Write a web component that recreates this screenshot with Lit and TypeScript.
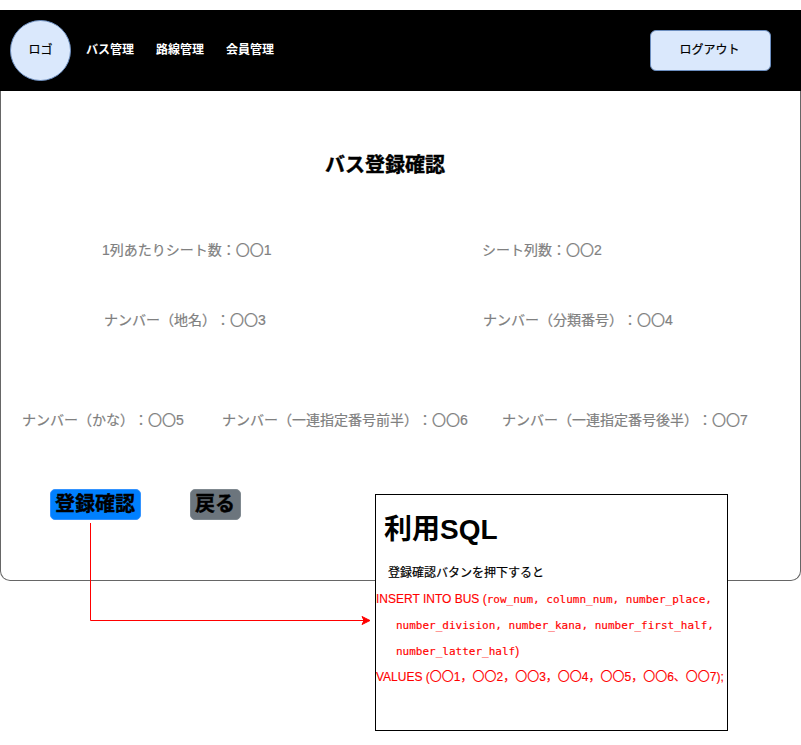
import { LitElement, html, css, svg } from "lit";
import { customElement } from "lit/decorators.js";

@customElement("app-root")
export class AppRoot extends LitElement {
  static styles = css`
    :host {
      display: block;
      position: relative;
      box-sizing: border-box;
      width: 801px;
      height: 745px;
      padding-top: 10px;
      overflow: hidden;
      background: #fff;
      color: #000;
      font: 12px/20px "Liberation Sans", "Noto Sans CJK JP", sans-serif;
      text-spacing-trim: space-all;
      white-space: nowrap;
    }
    * { box-sizing: border-box; }
    .frame {
      height: 571px;
      border: 1px solid #666;
      border-top: 0;
      border-radius: 0 0 10px 10px;
    }
    header {
      display: flex;
      align-items: center;
      height: 81px;
      margin: 0 -1px;
      padding: 0 30px 0 10px;
      background: #000;
    }
    .logo, .logout {
      display: flex;
      align-items: center;
      justify-content: center;
      background: #dae8fc;
      border: 1px solid #6c8ebf;
      padding-bottom: 2px;
      -webkit-text-stroke: 0.2px currentColor;
    }
    .logo { width: 61px; height: 61px; border-radius: 50%; }
    .logout {
      width: 121px;
      height: 41px;
      padding-right: 2px;
      border-radius: 6px;
      margin-left: auto;
    }
    nav {
      display: flex;
      gap: 22px;
      margin-left: 15px;
      padding-bottom: 2px;
      color: #fff;
      font-weight: 700;
    }
    h1 {
      margin: 59px 0 0 324px;
      font-size: 20px;
      line-height: 30px;
      -webkit-text-stroke: 0.4px currentColor;
    }
    .row {
      display: flex;
      color: #808080;
      font-size: 14px;
      line-height: 20px;
      -webkit-text-stroke: 0.2px currentColor;
    }
    .seats { margin: 60px 0 0 101px; }
    .seats .field:first-child { width: 380px; }
    .plate { margin: 50px 0 0 103px; }
    .plate .field:first-child { width: 379px; }
    .serial { margin: 80px 0 0 21px; }
    .serial .field:nth-child(1) { width: 200px; }
    .serial .field:nth-child(2) { width: 280px; }
    .actions {
      display: flex;
      gap: 49px;
      margin: 59px 0 0 49px;
    }
    .btn {
      height: 31px;
      padding: 0 4px;
      border-radius: 5px;
      font-size: 20px;
      font-weight: 700;
      line-height: 29px;
      -webkit-text-stroke: 0.4px currentColor;
    }
    .primary { width: 91px; background: #0080ff; border: 1px solid #3393ff; }
    .back { width: 51px; background: #6c757d; border: 1px solid #7f888f; }
    .connector {
      position: absolute;
      left: 80px;
      top: 515px;
      width: 296px;
      height: 116px;
    }
    .sql {
      position: absolute;
      left: 375px;
      top: 494px;
      width: 353px;
      height: 237px;
      border: 1px solid #000;
      background: #fff;
    }
    h2 {
      margin: 15px 0 0 8px;
      font-size: 28px;
      line-height: 40px;
    }
    .when {
      margin: 13px 0 0 12px;
      line-height: 20px;
      -webkit-text-stroke: 0.2px currentColor;
    }
    .code {
      margin-top: 3px;
      color: #f00;
      line-height: 26px;
      -webkit-text-stroke: 0.15px currentColor;
    }
    .mono { font: 11px/26px "DejaVu Sans Mono", monospace; }
    .code div { height: 26px; }
    .indent { padding-left: 20px; }
  `;

  private fields(kind: string, items: string[]) {
    return html`<div class="row ${kind}">
      ${items.map((t) => html`<div class="field">${t}</div>`)}
    </div>`;
  }

  private arrow = svg`
    <path d="M10.5 8V105.5H285" fill="none" stroke="#f00"></path>
    <path d="M290 105.5L282 109.5L284 105.5L282 101.5Z" fill="#f00" stroke="#f00" stroke-linejoin="round"></path>`;

  render() {
    return html`
      <div class="frame">
        <header>
          <div class="logo">ロゴ</div>
          <nav><span>バス管理</span><span>路線管理</span><span>会員管理</span></nav>
          <div class="logout">ログアウト</div>
        </header>
        <h1>バス登録確認</h1>
        ${this.fields("seats", ["1列あたりシート数：〇〇1", "シート列数：〇〇2"])}
        ${this.fields("plate", ["ナンバー（地名）：〇〇3", "ナンバー（分類番号）：〇〇4"])}
        ${this.fields("serial", [
          "ナンバー（かな）：〇〇5",
          "ナンバー（一連指定番号前半）：〇〇6",
          "ナンバー（一連指定番号後半）：〇〇7",
        ])}
        <div class="actions">
          <div class="btn primary">登録確認</div>
          <div class="btn back">戻る</div>
        </div>
      </div>
      <svg class="connector" viewBox="0 0 296 116">${this.arrow}</svg>
      <section class="sql">
        <h2>利用SQL</h2>
        <div class="when">登録確認バタンを押下すると</div>
        <div class="code">
          <div>INSERT INTO BUS (<span class="mono">row_num, column_num, number_place,</span></div>
          <div class="indent"><span class="mono">number_division, number_kana, number_first_half,</span></div>
          <div class="indent"><span class="mono">number_latter_half</span>)</div>
          <div>VALUES (〇〇1，〇〇2，〇〇3，〇〇4，〇〇5，〇〇6、〇〇7);</div>
        </div>
      </section>
    `;
  }
}
